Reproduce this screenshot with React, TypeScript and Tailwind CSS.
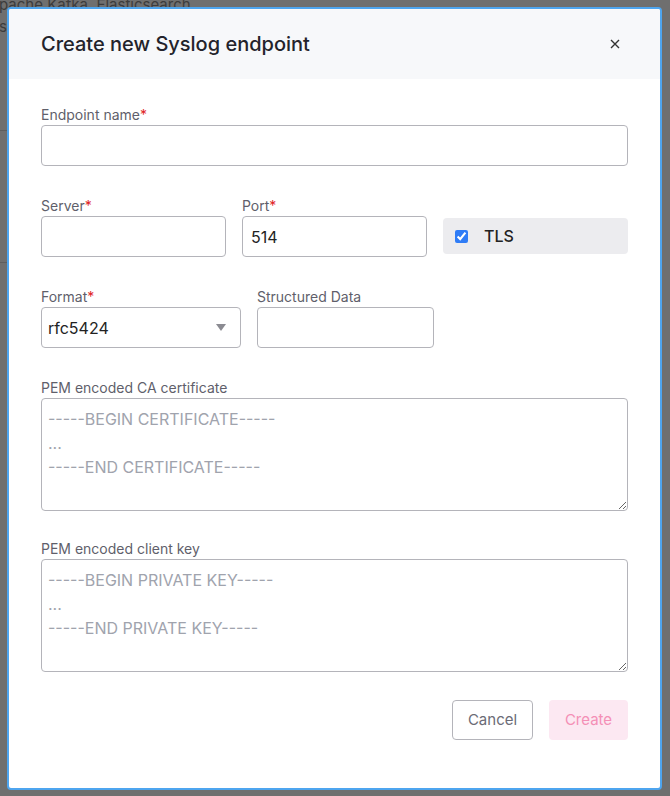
import React, { useState } from 'react';

const font = { fontFamily: 'Inter, "Noto Sans", sans-serif' };

function Label({ text, required }: { text: string; required?: boolean }) {
  return (
    <div className="h-[20px] text-[14px] leading-[20px] text-[#5f5f6b]">
      {text}
      {required && <span className="text-[#e02424]">*</span>}
    </div>
  );
}

function TextInput({ value, className = '' }: { value?: string; className?: string }) {
  return (
    <input
      defaultValue={value}
      className={`h-[41px] w-full rounded-[4px] border border-[#b4b4ba] bg-white px-2 text-[16px] text-[#222] outline-none ${className}`}
    />
  );
}

function Pem({ label, begin, end }: { label: string; begin: string; end: string }) {
  return (
    <div>
      <Label text={label} />
      <textarea
        placeholder={`${begin}\n...\n${end}`}
        className="block h-[113px] w-full resize-y rounded-[4px] border border-[#b4b4ba] px-[6px] py-2 text-[16px] leading-[24px] text-[#222] outline-none placeholder:text-[#a0a3ad]"
      />
    </div>
  );
}

export default function App() {
  const [tls, setTls] = useState(true);

  return (
    <div className="relative h-[796px] w-[670px] overflow-hidden bg-[#6f6f6f]" style={font}>
      {/* page behind the overlay */}
      <div className="absolute left-[-1px] top-[-6px] text-[15px] leading-[22px] text-[#3c3c3c]">
        pache Kafka, Elasticsearch,
        <br />s
      </div>
      <div className="absolute left-0 top-[130px] h-px w-[8px] bg-[#5e5e5e]" />
      <div className="absolute left-0 top-[262px] h-px w-[8px] bg-[#5e5e5e]" />

      <div className="relative ml-[7px] mt-[7px] flex h-[783px] w-[655px] flex-col overflow-hidden rounded-[4px] border-2 border-[#4ea5ef] bg-white">
        <div className="flex h-[70px] items-center justify-between bg-[#f7f8fa] pl-8 pr-[40px]">
          <h2 className="text-[20px] font-medium text-[#23232b]">Create new Syslog endpoint</h2>
          <button className="text-[#333]">
            <svg width="10" height="10" viewBox="0 0 10 10" fill="none" stroke="currentColor" strokeWidth="1.4">
              <path d="M1 1l8 8M9 1l-8 8" />
            </svg>
          </button>
        </div>

        <div className="flex flex-col px-8 pt-[26px]">
          <div>
            <Label text="Endpoint name" required />
            <TextInput />
          </div>

          <div className="mt-[30px] grid grid-cols-3 gap-4">
            <div>
              <Label text="Server" required />
              <TextInput />
            </div>
            <div>
              <Label text="Port" required />
              <TextInput value="514" />
            </div>
            <div className="flex items-end">
              <label className="mb-[3px] flex h-[36px] w-full items-center gap-4 rounded-[4px] bg-[#ececef] px-[12px]">
                <input
                  type="checkbox"
                  checked={tls}
                  onChange={() => setTls(!tls)}
                  className="h-[13px] w-[13px] accent-[#2f7cf6]"
                />
                <span className="text-[16px] font-medium text-[#222]">TLS</span>
              </label>
            </div>
          </div>

          <div className="mt-[30px] flex gap-4">
            <div className="w-[200px]">
              <Label text="Format" required />
              <div className="relative">
                <select className="h-[41px] w-full appearance-none rounded-[4px] border border-[#b4b4ba] bg-white px-[6px] text-[16px] text-[#222] outline-none">
                  <option>rfc5424</option>
                  <option>rfc3164</option>
                </select>
                <svg className="pointer-events-none absolute right-[15px] top-[17px]" width="10" height="7" viewBox="0 0 10 7">
                  <path d="M0 0h10L5 7z" fill="#8b8b92" />
                </svg>
              </div>
            </div>
            <div className="w-[177px]">
              <Label text="Structured Data" />
              <TextInput />
            </div>
          </div>

          <div className="mt-[30px]">
            <Pem label="PEM encoded CA certificate" begin="-----BEGIN CERTIFICATE-----" end="-----END CERTIFICATE-----" />
          </div>
          <div className="mt-[28px]">
            <Pem label="PEM encoded client key" begin="-----BEGIN PRIVATE KEY-----" end="-----END PRIVATE KEY-----" />
          </div>

          <div className="mt-[28px] flex justify-end gap-4">
            <button className="h-[40px] w-[81px] rounded-[4px] border border-[#b4b4ba] text-[15px] text-[#6b6b76]">
              Cancel
            </button>
            <button disabled className="h-[40px] w-[79px] rounded-[4px] bg-[#fce8f2] text-[15px] text-[#f48fb6]">
              Create
            </button>
          </div>
        </div>
      </div>
    </div>
  );
}
